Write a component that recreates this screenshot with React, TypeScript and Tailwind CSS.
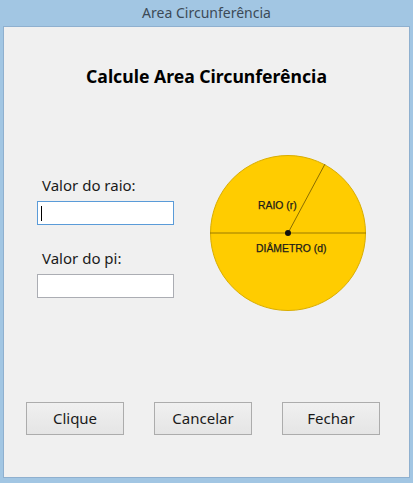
import React from "react";

const ui = { fontFamily: '"Noto Sans", "Open Sans", Arial, sans-serif' };

function Circle() {
  return (
    <svg width="160" height="160" viewBox="0 0 160 160" className="block">
      <circle cx="80" cy="79" r="77.5" fill="#ffcc00" stroke="#d9ad00" strokeWidth="1" />
      <line x1="2" y1="79" x2="158" y2="79" stroke="#9a7a00" strokeWidth="1" />
      <line x1="80" y1="79" x2="117" y2="10" stroke="#8a6d00" strokeWidth="1" />
      <circle cx="80" cy="79" r="3" fill="#111" />
      <text x="50" y="55" fontFamily='"Liberation Sans", Arial, sans-serif' fontSize="10.4" fill="#1a1a1a" stroke="#1a1a1a" strokeWidth="0.25">
        RAIO (r)
      </text>
      <text x="48" y="98" fontFamily='"Liberation Sans", Arial, sans-serif' fontSize="10.4" fill="#1a1a1a" stroke="#1a1a1a" strokeWidth="0.25">
        DIÂMETRO (d)
      </text>
    </svg>
  );
}

function Btn({ label }: { label: string }) {
  return (
    <div className="h-[33px] w-[98px] border border-[#acacac] bg-gradient-to-b from-[#f0f0f0] to-[#e5e5e5] flex items-center justify-center text-[15px] text-[#1a1a1a]">
      {label}
    </div>
  );
}

export default function App() {
  return (
    <div className="w-[413px] h-[483px] bg-[#a2c6e3] flex flex-col" style={ui}>
      <div className="h-[26px] flex items-center justify-center text-[14px] text-[#3c4a57] pb-[1px]">
        Area Circunferência
      </div>
      <div className="mx-[3px] h-[452px] border border-[#8fb0cf] bg-[#f0f0f0] flex flex-col">
        <div className="mt-[37px] h-[24px] flex items-center justify-center text-[17.6px] font-bold text-black leading-[24px]">
          Calcule Area Circunferência
        </div>
        <div className="mt-[66px] flex">
          <div className="ml-[33px] w-[137px] pt-[21px] flex flex-col">
            <div className="h-[20px] pl-[5px] text-[15px] leading-[20px] text-[#1a1a1a]">Valor do raio:</div>
            <div className="mt-[6px] h-[24px] border border-[#5a9bd8] bg-white flex items-center pl-[3px]">
              <div className="w-[1px] h-[15px] bg-black" />
            </div>
            <div className="mt-[23px] h-[20px] pl-[5px] text-[15px] leading-[20px] text-[#1a1a1a]">Valor do pi:</div>
            <div className="mt-[6px] h-[24px] border border-[#abadb3] bg-white" />
          </div>
          <div className="ml-[34px]">
            <Circle />
          </div>
        </div>
        <div className="mt-[88px] flex pl-[22px] gap-[30px]">
          <Btn label="Clique" />
          <Btn label="Cancelar" />
          <Btn label="Fechar" />
        </div>
      </div>
    </div>
  );
}
